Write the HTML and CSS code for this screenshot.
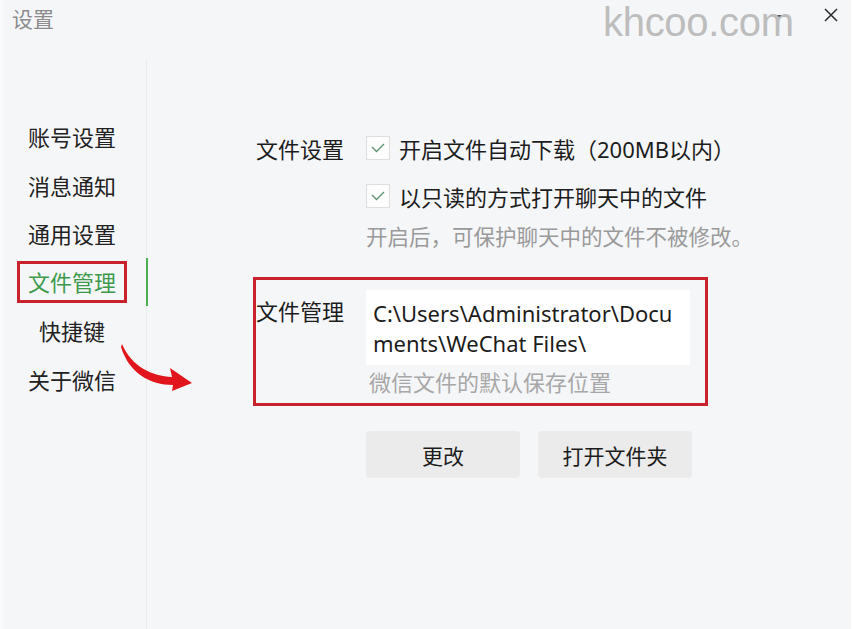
FILE: index.html
```html
<!DOCTYPE html>
<html lang="zh-CN">
<head>
    <meta charset="UTF-8">
    <meta name="viewport" content="width=device-width, initial-scale=1.0">
    <title>设置</title>
    <link rel="stylesheet" href="styles.css">
</head>
<body>

<div class="window">
    <!-- Title bar -->
    <header class="titlebar">
        <span class="title">设置</span>
        <div class="controls">
            <span class="btn-min"></span>
            <svg class="btn-close" width="14" height="14" viewBox="0 0 14 14">
                <path d="M1 1 L13 13 M13 1 L1 13" stroke="#2b2b2b" stroke-width="1.5" fill="none"/>
            </svg>
        </div>
        <span class="watermark">khcoo.com</span>
    </header>

    <div class="content">
        <!-- Sidebar -->
        <nav class="sidebar">
            <div class="nav-item">账号设置</div>
            <div class="nav-item">消息通知</div>
            <div class="nav-item">通用设置</div>
            <div class="nav-item active"><span class="mark">文件管理</span></div>
            <div class="nav-item">快捷键</div>
            <div class="nav-item">关于微信</div>
        </nav>

        <!-- Main panel -->
        <main class="main">
            <div class="row">
                <div class="label">文件设置</div>
                <label class="check">
                    <span class="box">
                        <svg width="14" height="10" viewBox="0 0 14 10">
                            <path d="M1 4 L5.5 8.5 L13 1" stroke="#5f8f6f" stroke-width="1.3" fill="none"/>
                        </svg>
                    </span>
                    开启文件自动下载（200MB以内）
                </label>
            </div>
            <div class="row">
                <div class="label"></div>
                <label class="check">
                    <span class="box">
                        <svg width="14" height="10" viewBox="0 0 14 10">
                            <path d="M1 4 L5.5 8.5 L13 1" stroke="#5f8f6f" stroke-width="1.3" fill="none"/>
                        </svg>
                    </span>
                    以只读的方式打开聊天中的文件
                </label>
            </div>
            <div class="row hint-row">
                <div class="label"></div>
                <div class="hint">开启后，可保护聊天中的文件不被修改。</div>
            </div>

            <div class="path-row">
                <div class="label path-label">文件管理</div>
                <div class="path-col">
                    <div class="path-box">C:\Users\Administrator\Docu<br>ments\WeChat Files\</div>
                    <div class="hint path-hint">微信文件的默认保存位置</div>
                </div>
            </div>

            <div class="buttons">
                <button class="button">更改</button>
                <button class="button">打开文件夹</button>
            </div>
        </main>
    </div>

    <!-- Annotation arrow -->
    <svg class="arrow" width="80" height="60" viewBox="0 0 80 60">
        <path d="M7 11 C17 34 37 43 57 44 L55 35 L77 50 L57 58 L58 52 C35 52 14 40 6 14 Z" fill="#e1161c"/>
    </svg>
</div>

</body>
</html>
```

FILE: styles.css
```css
* {
    box-sizing: border-box;
}
body {
    margin: 0;
    font-family: "Noto Sans", "Noto Sans CJK SC", sans-serif;
    color: #1c1c1c;
}
.window {
    position: relative;
    width: 854px;
    height: 629px;
    background-color: #f5f6f8;
    border-left: 3px solid #fbfbfc;
    border-right: 3px solid #ffffff;
    overflow: hidden;
}
.titlebar {
    position: relative;
    height: 60px;
    display: flex;
    justify-content: space-between;
    align-items: flex-start;
}
.title {
    padding-left: 9px;
    font-size: 21px;
    line-height: 38px;
    color: #8c8c8c;
}
.controls {
    display: flex;
    align-items: center;
    gap: 38px;
    padding: 8px 13px 0 0;
}
.btn-min {
    display: block;
    width: 13px;
    height: 2px;
    margin-top: 2px;
    background-color: #555;
}
.watermark {
    position: absolute;
    left: 600px;
    top: 0;
    font-family: "Liberation Sans", Arial, sans-serif;
    font-size: 40px;
    letter-spacing: -0.3px;
    color: #bdbdbd;
}
.content {
    display: flex;
    height: 569px;
}
.sidebar {
    width: 144px;
    padding: 52px 5px 0 0;
    border-right: 1px solid #e9eaec;
}
.nav-item {
    position: relative;
    height: 48.5px;
    display: flex;
    align-items: center;
    justify-content: center;
    font-size: 22px;
    color: #222;
}
.nav-item.active {
    color: #3d9a4d;
}
.nav-item .mark {
    display: inline-block;
    padding: 0 8px;
    line-height: 36px;
    border: 3px solid #c8232c;
}
.nav-item.active::after {
    content: "";
    position: absolute;
    right: -7px;
    top: 0;
    width: 2px;
    height: 48px;
    background-color: #4caf50;
}
.main {
    flex: 1;
    padding: 64px 0 0 106px;
}
.row {
    display: grid;
    grid-template-columns: 110px 1fr;
    align-items: center;
    height: 48px;
    padding-left: 3px;
    font-size: 22px;
}
.check {
    display: flex;
    align-items: center;
    gap: 9px;
}
.check .box {
    display: flex;
    align-items: center;
    justify-content: center;
    width: 24px;
    height: 24px;
    border: 1px solid #dedede;
    background-color: #fdfdfd;
}
.hint-row {
    height: 30px;
    margin-top: 2px;
}
.hint {
    font-size: 21.5px;
    color: #9a9a9a;
    line-height: 30px;
}
.path-row {
    display: grid;
    grid-template-columns: 110px 324px;
    width: 455px;
    margin-top: 25px;
    padding: 10px 0 6px 0;
    border: 3px solid #c8232c;
}
.path-label {
    font-size: 22px;
    line-height: 30px;
    padding-top: 6px;
}
.path-box {
    background-color: #fff;
    padding: 8px 7px;
    font-size: 22px;
    line-height: 30px;
    height: 75px;
}
.path-hint {
    margin-top: 2px;
    padding-left: 3px;
    font-size: 22px;
    color: #a8a8a8;
}
.buttons {
    display: flex;
    gap: 18px;
    margin: 25px 0 0 113px;
}
.button {
    width: 154px;
    height: 47px;
    border: none;
    border-radius: 4px;
    background-color: #ebebeb;
    font-family: "Noto Sans CJK SC", sans-serif;
    font-size: 21px;
    color: #1c1c1c;
}
.arrow {
    position: absolute;
    left: 112px;
    top: 333px;
}
```
